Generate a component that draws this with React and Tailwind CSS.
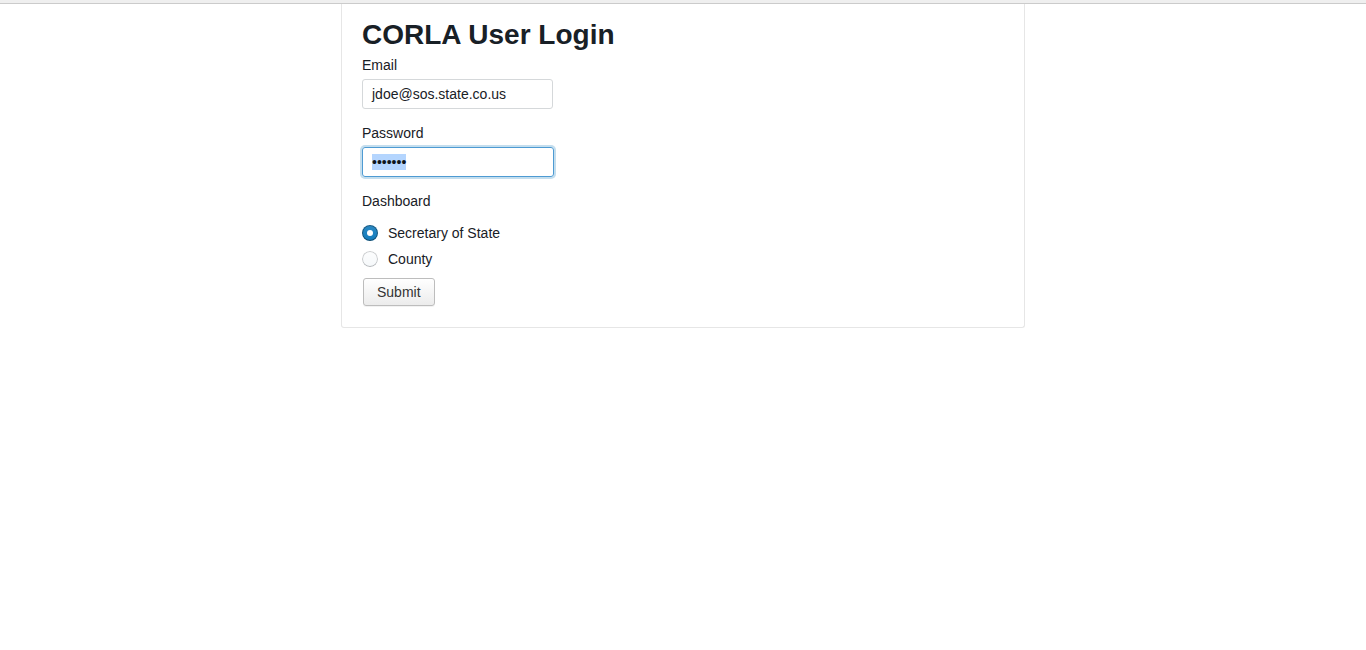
import React from 'react';

const Radio = ({ checked, label }) => (
  <div className="flex items-center h-[18px]">
    {checked ? (
      <span className="w-4 h-4 rounded-full bg-[#137cbd] shadow-[inset_0_0_0_1px_rgba(16,22,26,0.4),inset_0_-1px_0_rgba(16,22,26,0.2)] bg-gradient-to-b from-[rgba(255,255,255,0.1)] to-[rgba(255,255,255,0)] flex items-center justify-center">
        <span className="w-[6px] h-[6px] rounded-full bg-white" />
      </span>
    ) : (
      <span className="w-4 h-4 rounded-full bg-[#f5f8fa] bg-gradient-to-b from-[rgba(255,255,255,0.8)] to-[rgba(255,255,255,0)] shadow-[inset_0_0_0_1px_rgba(16,22,26,0.2),inset_0_-1px_0_rgba(16,22,26,0.1)]" />
    )}
    <span className="ml-[10px]">{label}</span>
  </div>
);

const App = () => {
  return (
    <div className="min-h-screen bg-white text-[#182026] text-[14px] leading-[18px]" style={{ fontFamily: '"Liberation Sans", Arial, sans-serif' }}>
      <div className="h-[4px] bg-[#efefef] border-b border-[#cbcbcb]" />
      <div className="w-[684px] mx-auto border border-t-0 border-[#e6e6e6] rounded-b-[3px] px-5 pt-[15px] pb-[21px]">
        <h3 className="text-[28px] leading-[32px] font-bold">CORLA User Login</h3>

        <label className="block mt-[5px] mb-[15px]">
          Email
          <div className="mt-[5px] w-[191px] h-[30px] border border-[#d5d8da] rounded-[3px] px-[9px] flex items-center text-[#182026]">
            jdoe@sos.state.co.us
          </div>
        </label>

        <label className="block mb-[15px]">
          Password
          <div className="mt-[5px] w-[192px] h-[30px] border border-[#4e9bd3] rounded-[3px] px-[9px] flex items-center shadow-[0_0_0_2px_rgba(19,124,189,0.25)]">
            <span className="bg-[#b4d5fe] leading-[16px] h-[16px] text-[14px] text-[#10161a]">•••••••</span>
          </div>
        </label>

        <label className="block mb-[14px]">Dashboard</label>

        <div className="flex flex-col gap-[8px]">
          <Radio checked label="Secretary of State" />
          <Radio label="County" />
        </div>

        <button className="mt-[10px] ml-px h-[28px] px-[13px] rounded-[3px] border border-[#bdbdbd] bg-gradient-to-b from-white to-[#ececec] text-[#333] text-[14px] shadow-[0_1px_0_rgba(0,0,0,0.05)]">
          Submit
        </button>
      </div>
    </div>
  );
};

export default App;
